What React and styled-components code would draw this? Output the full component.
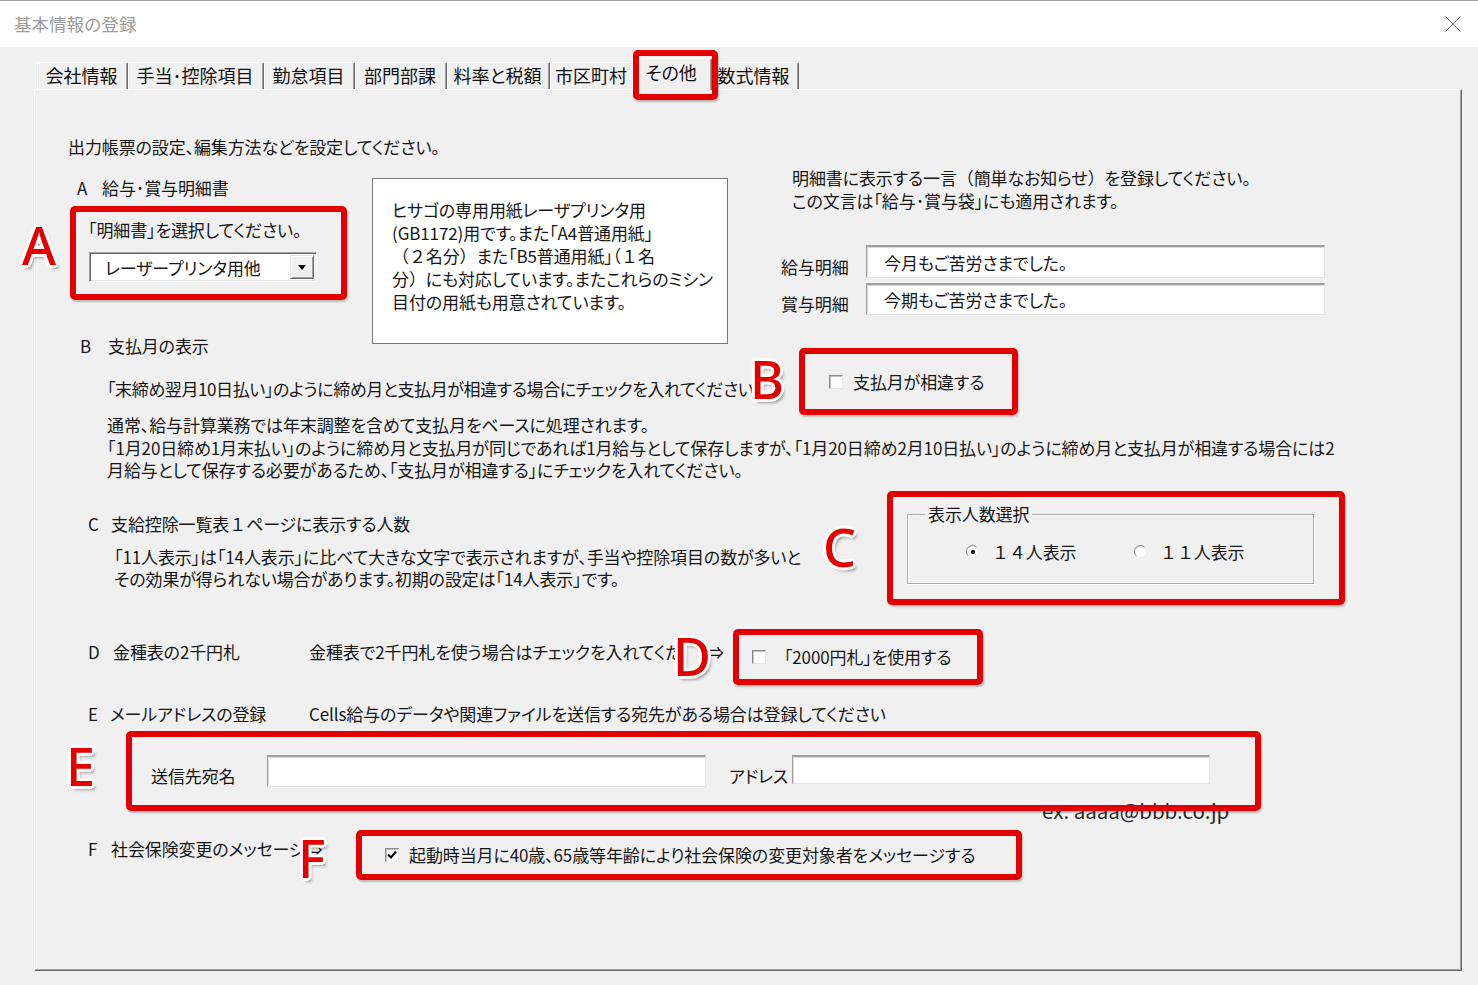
import React from 'react';
import styled, { createGlobalStyle } from 'styled-components';

const JP = `"Noto Sans CJK JP", "Noto Sans CJK SC", sans-serif`;

const GlobalStyle = createGlobalStyle`
  html, body { margin: 0; padding: 0; background: #f0f0f0; }
  #root { width: 1478px; height: 985px; }
`;

const Window = styled.div`
  width: 1478px;
  height: 985px;
  box-sizing: border-box;
  background: #f0f0f0;
  border-top: 1px solid #a5a5a5;
  display: flex;
  flex-direction: column;
  font-family: ${JP};
  font-size: 17px;
  letter-spacing: -0.12px;
  font-feature-settings: "palt";
  color: #161616;
  overflow: hidden;
`;

const TitleBar = styled.div`
  height: 46px;
  flex-shrink: 0;
  background: #fff;
  display: flex;
  align-items: center;
  justify-content: space-between;
  padding: 0 17px 0 14px;
`;

const Title = styled.div`
  color: #9b9b9b;
  font-size: 17.5px;
  letter-spacing: 0;
  font-feature-settings: normal;
  margin-top: -2px;
`;

const Body = styled.div`
  padding: 11px 0 0 34px;
  display: flex;
  flex-direction: column;
`;

const TabRow = styled.div`
  display: flex;
  align-items: flex-end;
  height: 31px;
  padding-left: 3px;
  position: relative;
  z-index: 2;
`;

const Tab = styled.div`
  position: relative;
  z-index: ${(p) => (p.$active ? 3 : 1)};
  flex-shrink: 0;
  box-sizing: border-box;
  width: ${(p) => p.$w}px;
  height: ${(p) => (p.$active ? 32 : 27)}px;
  margin: 0 ${(p) => (p.$active ? -2 : 0)}px ${(p) => (p.$active ? -1 : 0)}px;
  padding: 0 2px ${(p) => (p.$active ? 6 : 3)}px 0;
  background: #f0f0f0;
  border-top: 1px solid #fff;
  border-left: 1px solid #fff;
  border-right: 1px solid #696969;
  box-shadow: inset -1px 0 #a0a0a0;
  border-radius: 2px 2px 0 0;
  display: flex;
  align-items: center;
  justify-content: center;
  font-size: 18px;
  letter-spacing: 0;
  white-space: nowrap;
  color: #111;
`;

const TabMark = styled.div`
  position: absolute;
  left: 0;
  top: -9px;
  width: 85px;
  height: 50px;
  box-sizing: border-box;
  border: 6px solid #e20000;
  border-radius: 5px;
  box-shadow: 1px 2px 2px rgba(0, 0, 0, 0.25);
  pointer-events: none;
`;

const Panel = styled.div`
  width: 1428px;
  height: 882px;
  box-sizing: border-box;
  border-top: 1px solid #fff;
  border-left: 1px solid #fff;
  border-right: 1px solid #696969;
  border-bottom: 1px solid #696969;
  box-shadow: inset -1px -1px #a0a0a0;
  display: flex;
  flex-direction: column;
  align-items: flex-start;
`;

const Line = styled.div`
  line-height: ${(p) => p.$lh || 22}px;
  white-space: nowrap;
  margin: ${(p) => p.$m || 0};
  letter-spacing: ${(p) => (p.$ls != null ? `${p.$ls}px` : 'inherit')};
`;

const Row = styled.div`
  display: flex;
  align-items: ${(p) => p.$align || 'flex-start'};
  margin: ${(p) => p.$m || 0};
`;

const Column = styled.div`
  display: flex;
  flex-direction: column;
  align-items: flex-start;
  flex-shrink: 0;
  width: ${(p) => (p.$w ? `${p.$w}px` : 'auto')};
  margin: ${(p) => p.$m || 0};
`;

const Head = styled.div`
  display: flex;
  line-height: 22px;
  white-space: nowrap;
  flex-shrink: 0;
  width: ${(p) => (p.$w ? `${p.$w}px` : 'auto')};
  margin: ${(p) => p.$m || 0};
`;

const Key = styled.span`
  width: ${(p) => p.$w || 25}px;
  flex-shrink: 0;
`;

const Clip = styled.div`
  width: ${(p) => p.$w}px;
  overflow: hidden;
  white-space: nowrap;
  line-height: 22px;
  flex-shrink: 0;
  margin: ${(p) => p.$m || 0};
`;

const Paragraph = styled.div`
  line-height: 22.5px;
  white-space: nowrap;
  margin: ${(p) => p.$m || 0};
`;

const InfoBox = styled.div`
  width: 356px;
  height: 166px;
  box-sizing: border-box;
  flex-shrink: 0;
  margin-top: 12px;
  background: #fff;
  border: 1px solid #7a7a7a;
  padding: 19px 0 0 19px;
  line-height: 23px;
  white-space: nowrap;
`;

const Wide = styled.span`
  font-feature-settings: normal;
`;

const Callout = styled.div`
  position: relative;
  z-index: 2;
  flex-shrink: 0;
  box-sizing: border-box;
  width: ${(p) => p.$w}px;
  height: ${(p) => p.$h}px;
  margin: ${(p) => p.$m || 0};
  padding: ${(p) => p.$pad || 0};
  border: 6px solid #e20000;
  border-radius: 5px;
  box-shadow: 1px 2px 2px rgba(0, 0, 0, 0.22);
  display: flex;
  flex-direction: ${(p) => (p.$col ? 'column' : 'row')};
  align-items: ${(p) => (p.$col ? 'flex-start' : p.$top ? 'flex-start' : 'center')};
`;

const Letter = styled.span`
  position: absolute;
  left: ${(p) => p.$x}px;
  top: 50%;
  transform: translateY(calc(-50% + ${(p) => p.$dy || 0}px));
  font-family: "Noto Sans", "DejaVu Sans", sans-serif;
  font-feature-settings: normal;
  letter-spacing: 0;
  font-size: 52px;
  font-weight: 500;
  line-height: 1;
  color: #e50000;
  text-shadow: -3px 0 #fff, 3px 0 #fff, 0 -3px #fff, 0 3px #fff, -2px -2px #fff,
    2px 2px #fff, -2px 2px #fff, 2px -2px #fff, 3px 4px 3px rgba(0, 0, 0, 0.35);
  pointer-events: none;
  z-index: 5;
`;

const Combo = styled.div`
  width: 228px;
  height: 30px;
  box-sizing: border-box;
  margin: 11px 0 0 1px;
  background: #fff;
  border-top: 1px solid #a0a0a0;
  border-left: 1px solid #a0a0a0;
  border-right: 1px solid #fff;
  border-bottom: 1px solid #fff;
  box-shadow: inset 1px 1px #696969, inset -1px -1px #e3e3e3;
  display: flex;
  align-items: center;
  padding: 2px 2px 2px 15px;
`;

const ComboText = styled.span`
  flex: 1;
  white-space: nowrap;
`;

const ComboButton = styled.span`
  width: 24px;
  height: 24px;
  box-sizing: border-box;
  background: #f0f0f0;
  border-top: 1px solid #e3e3e3;
  border-left: 1px solid #e3e3e3;
  border-right: 1px solid #696969;
  border-bottom: 1px solid #696969;
  box-shadow: inset 1px 1px #fff, inset -1px -1px #a0a0a0;
  display: flex;
  align-items: center;
  justify-content: center;
`;

const Field = styled.div`
  width: ${(p) => p.$w}px;
  height: ${(p) => p.$h}px;
  flex-shrink: 0;
  box-sizing: border-box;
  background: #fff;
  border-top: 2px solid #a0a0a0;
  border-left: 1px solid #a0a0a0;
  border-right: 1px solid #e3e3e3;
  border-bottom: 1px solid #e3e3e3;
  box-shadow: inset 1px 1px #dcdcdc;
  display: flex;
  align-items: center;
  padding-left: 17px;
  white-space: nowrap;
`;

const FieldRow = styled.div`
  display: flex;
  align-items: flex-end;
  margin-top: ${(p) => p.$mt}px;
`;

const FieldLabel = styled.span`
  width: ${(p) => p.$w}px;
  flex-shrink: 0;
  line-height: 22px;
  white-space: nowrap;
  margin: ${(p) => p.$m || 0};
`;

const Notes = styled.div`
  padding-left: 11px;
  line-height: 23px;
  white-space: nowrap;
`;

const CheckRow = styled.label`
  display: flex;
  align-items: center;
  gap: ${(p) => p.$gap}px;
  white-space: nowrap;
`;

const Box = styled.span`
  width: 14px;
  height: 14px;
  flex-shrink: 0;
  box-sizing: border-box;
  background: #fff;
  border: 1px solid;
  border-color: #8a8a8a #e6e6e6 #e6e6e6 #8a8a8a;
  box-shadow: inset 1px 1px #c4c4c4;
  display: flex;
  align-items: center;
  justify-content: center;
`;

const Radio = styled.span`
  width: 13px;
  height: 13px;
  flex-shrink: 0;
  box-sizing: border-box;
  border-radius: 50%;
  background: #fff;
  border: 1px solid;
  border-color: #8a8a8a #ececec #ececec #8a8a8a;
  display: flex;
  align-items: center;
  justify-content: center;
  &::after {
    content: '';
    width: 4px;
    height: 4px;
    border-radius: 50%;
    background: ${(p) => (p.$on ? '#000' : 'transparent')};
  }
`;

const GroupBox = styled.div`
  position: relative;
  width: 407px;
  height: 70px;
  box-sizing: border-box;
  border: 1px solid #a9a9a9;
  box-shadow: inset 1px 1px #fff, 1px 1px #fff;
  display: grid;
  grid-template-columns: 168px auto;
  align-items: center;
  padding: 6px 0 0 58px;
`;

const Legend = styled.span`
  position: absolute;
  left: 17px;
  top: -12px;
  padding: 0 3px;
  background: #f0f0f0;
  line-height: 22px;
  white-space: nowrap;
`;

const RadioText = styled.span`
  font-feature-settings: normal;
`;

const Hint = styled.div`
  position: relative;
  z-index: 1;
  margin: -12px 0 0 1007px;
  font-size: 20.5px;
  letter-spacing: 0;
  line-height: 22px;
  color: #2a2a2a;
  white-space: nowrap;
  font-feature-settings: normal;
`;

const CloseIcon = () => (
  <svg width="16" height="16" viewBox="0 0 16 16">
    <path d="M0.5 0.5 L15.5 15.5 M15.5 0.5 L0.5 15.5" stroke="#707070" strokeWidth="1" />
  </svg>
);

const CheckMark = () => (
  <svg width="10" height="10" viewBox="0 0 10 10">
    <path d="M1 4.5 L4 7.5 L9 1.5" stroke="#000" strokeWidth="2" fill="none" />
  </svg>
);

const Triangle = () => (
  <svg width="8" height="5" viewBox="0 0 8 5">
    <path d="M0 0 L8 0 L4 5 Z" fill="#000" />
  </svg>
);

const tabs = [
  { label: '会社情報', w: 91 },
  { label: '手当･控除項目', w: 136 },
  { label: '勤怠項目', w: 91 },
  { label: '部門部課', w: 92 },
  { label: '料率と税額', w: 103 },
  { label: '市区町村', w: 84 },
  { label: 'その他', w: 80, active: true },
  { label: '数式情報', w: 89 },
];

export default function App() {
  return (
    <>
      <GlobalStyle />
      <Window>
        <TitleBar>
          <Title>基本情報の登録</Title>
          <CloseIcon />
        </TitleBar>
        <Body>
          <TabRow>
            {tabs.map((t) => (
              <Tab key={t.label} $w={t.w} $active={t.active}>
                {t.label}
                {t.active && <TabMark />}
              </Tab>
            ))}
          </TabRow>
          <Panel>
            <Line $m="46px 0 0 33px">出力帳票の設定、編集方法などを設定してください。</Line>

            {/* A area */}
            <Row $m="8px 0 0 35px">
              <Column $w={302}>
                <Head $m="11px 0 0 7px">
                  <Key $w={25}>A</Key>給与･賞与明細書
                </Head>
                <Callout $w={277} $h={94} $col $pad="7px 0 0 12px" $m="7px 0 0 0">
                  <Letter $x={-54} $dy={-8}>A</Letter>
                  <Line>「明細書」を選択してください。</Line>
                  <Combo>
                    <ComboText>レーザープリンタ用他</ComboText>
                    <ComboButton>
                      <Triangle />
                    </ComboButton>
                  </Combo>
                </Callout>
              </Column>
              <InfoBox>
                ヒサゴの専用用紙レーザプリンタ用
                <br />
                (GB1172)用です。また「A4普通用紙」
                <br />
                <Wide>（２名分）</Wide>また「B5普通用紙」<Wide>（１名</Wide>
                <br />
                分<Wide>）</Wide>にも対応しています。またこれらのミシン
                <br />
                目付の用紙も用意されています。
              </InfoBox>
              <Column $m="0 0 0 53px">
                <Notes>
                  明細書に表示する一言<Wide>（</Wide>簡単なお知らせ<Wide>）</Wide>を登録してください。
                  <br />
                  この文言は「給与･賞与袋」にも適用されます。
                </Notes>
                <FieldRow $mt={33}>
                  <FieldLabel $w={85}>給与明細</FieldLabel>
                  <Field $w={459} $h={33}>今月もご苦労さまでした。</Field>
                </FieldRow>
                <FieldRow $mt={5}>
                  <FieldLabel $w={85}>賞与明細</FieldLabel>
                  <Field $w={459} $h={32}>今期もご苦労さまでした。</Field>
                </FieldRow>
              </Column>
            </Row>

            {/* B area */}
            <Row $m="-9px 0 0 0">
              <Column $w={764}>
                <Head $m="0 0 0 45px">
                  <Key $w={28}>B</Key>支払月の表示
                </Head>
                <Line $m="21px 0 0 72px" $ls={-0.4}>
                  「末締め翌月10日払い」のように締め月と支払月が相違する場合にチェックを入れてください
                </Line>
              </Column>
              <Callout $w={219} $h={67} $pad="0 0 0 24px" $m="13px 0 0 0">
                <Letter $x={-55} $dy={-3}>B</Letter>
                <CheckRow $gap={10}>
                  <Box />
                  支払月が相違する
                </CheckRow>
              </Callout>
            </Row>
            <Paragraph $m="-1px 0 0 72px">
              通常、給与計算業務では年末調整を含めて支払月をベースに処理されます。
              <br />
              「1月20日締め1月末払い」のように締め月と支払月が同じであれば1月給与として保存しますが、「1月20日締め2月10日払い」のように締め月と支払月が相違する場合には2
              <br />
              月給与として保存する必要があるため、「支払月が相違する」にチェックを入れてください。
            </Paragraph>

            {/* C area */}
            <Row $m="9px 0 0 0">
              <Column $w={852}>
                <Head $m="22px 0 0 53px">
                  <Key $w={23}>C</Key>支給控除一覧表<Wide>１</Wide>ページに表示する人数
                </Head>
                <Paragraph $m="11px 0 0 79px">
                  「11人表示」は「14人表示」に比べて大きな文字で表示されますが、手当や控除項目の数が多いと
                  <br />
                  その効果が得られない場合があります。初期の設定は「14人表示」です。
                </Paragraph>
              </Column>
              <Callout $w={458} $h={114} $col $pad="17px 0 0 14px">
                <Letter $x={-70} $dy={-1}>C</Letter>
                <GroupBox>
                  <Legend>表示人数選択</Legend>
                  <CheckRow $gap={13}>
                    <Radio $on />
                    <RadioText>１４人表示</RadioText>
                  </CheckRow>
                  <CheckRow $gap={13}>
                    <Radio />
                    <RadioText>１１人表示</RadioText>
                  </CheckRow>
                </GroupBox>
              </Callout>
            </Row>

            {/* D area */}
            <Row $m="24px 0 0 53px">
              <Head $w={221} $m="12px 0 0 0">
                <Key $w={25}>D</Key>金種表の2千円札
              </Head>
              <Clip $w={372} $m="12px 0 0 0">
                金種表で2千円札を使う場合はチェックを入れてください
              </Clip>
              <Line $m="12px 0 0 26px">⇒</Line>
              <Callout $w={250} $h={56} $pad="0 0 0 13px" $m="0 0 0 9px">
                <Letter $x={-66} $dy={-1}>D</Letter>
                <CheckRow $gap={18}>
                  <Box />
                  「2000円札」を使用する
                </CheckRow>
              </Callout>
            </Row>

            {/* E area */}
            <Row $m="18px 0 0 53px">
              <Head $w={221}>
                <Key $w={22}>E</Key>メールアドレスの登録
              </Head>
              <Line>Cells給与のデータや関連ファイルを送信する宛先がある場合は登録してください</Line>
            </Row>
            <Callout $w={1135} $h={80} $top $pad="18px 0 0 19px" $m="6px 0 0 91px">
              <Letter $x={-66} $dy={-5}>E</Letter>
              <FieldLabel $w={116} $m="10px 0 0 0">送信先宛名</FieldLabel>
              <Field $w={439} $h={32} />
              <FieldLabel $w={63} $m="10px 0 0 23px">アドレス</FieldLabel>
              <Field $w={418} $h={29} />
            </Callout>
            <Hint>ex: aaaa@bbb.co.jp</Hint>

            {/* F area */}
            <Row $m="9px 0 0 53px">
              <Head $w={268} $m="8px 0 0 0">
                <Key $w={23}>F</Key>社会保険変更のメッセージ⇒
              </Head>
              <Callout $w={666} $h={50} $pad="0 0 0 23px">
                <Letter $x={-64} $dy={3}>F</Letter>
                <CheckRow $gap={10}>
                  <Box>
                    <CheckMark />
                  </Box>
                  起動時当月に40歳、65歳等年齢により社会保険の変更対象者をメッセージする
                </CheckRow>
              </Callout>
            </Row>
          </Panel>
        </Body>
      </Window>
    </>
  );
}
